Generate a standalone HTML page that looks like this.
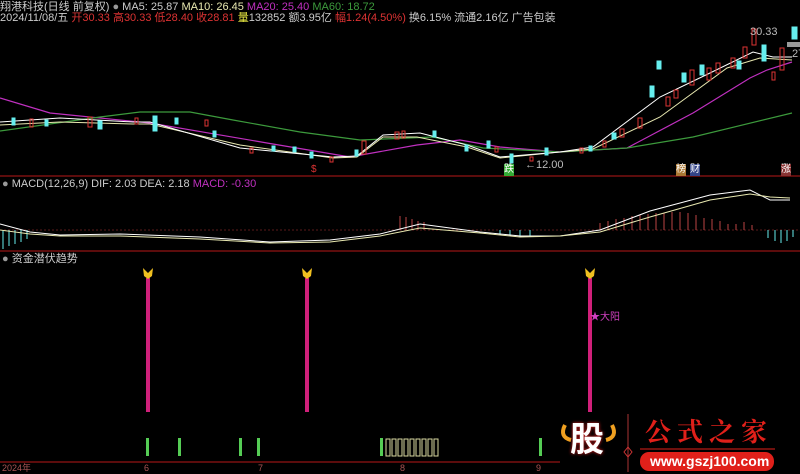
<!DOCTYPE html>
<html><head><meta charset="utf-8"><style>
body{margin:0;background:#000;width:800px;height:472px;overflow:hidden;font-family:"Liberation Sans","Noto Sans CJK SC",sans-serif}
.t{position:absolute;font-size:11px;white-space:nowrap;line-height:12px}
</style></head><body>
<div style="position:relative;width:800px;height:472px">
<svg width="800" height="472" style="position:absolute;left:0;top:0">
<g stroke="#7a1010" stroke-width="1.5"><line x1="0" y1="176" x2="800" y2="176"/><line x1="0" y1="251" x2="800" y2="251"/><line x1="0" y1="462" x2="560" y2="462"/></g>
<line x1="0" y1="230" x2="800" y2="230" stroke="#5a1a1a" stroke-dasharray="2,2"/>
<polyline fill="none" stroke="#c030c0" stroke-width="1.2" points="0,98 50,113 150,123 267,143 350,157 417,145 460,140 500,147 560,152 627,148 693,113 750,78 767,70 792,62"/>
<polyline fill="none" stroke="#3c9a3c" stroke-width="1.2" points="0,131 100,117 140,112 190,112 233,120 300,132 360,140 433,137 483,148 523,150 560,152 627,148 693,137 792,113"/>
<polyline fill="none" stroke="#e8e8b0" stroke-width="1" points="0,125 60,122 133,124 150,124 240,145 333,158 357,157 383,137 417,137 467,147 500,158 560,152 593,149 660,117 727,68 760,58 792,60"/>
<polyline fill="none" stroke="#fff" stroke-width="1" points="0,122 60,118 133,122 150,122 240,148 333,157 357,156 383,135 420,133 467,145 500,157 560,152 593,147 660,97 710,73 753,52 773,57 792,57"/>
<g fill="#6ee" stroke="#6ee">
<rect x="12" y="118" width="3" height="7"/><rect x="45" y="120" width="3" height="6"/><rect x="98" y="121" width="4" height="8"/><rect x="175" y="118" width="3" height="6"/><rect x="153" y="116" width="4" height="15"/><rect x="213" y="131" width="3" height="6"/><rect x="293" y="147" width="3" height="5"/><rect x="272" y="146" width="3" height="5"/><rect x="310" y="152" width="3" height="6"/><rect x="355" y="150" width="3" height="6"/><rect x="433" y="131" width="3" height="6"/><rect x="465" y="145" width="3" height="6"/><rect x="487" y="141" width="3" height="7"/><rect x="510" y="154" width="3" height="9"/><rect x="545" y="148" width="3" height="7"/><rect x="650" y="86" width="4" height="11"/><rect x="657" y="61" width="4" height="8"/><rect x="682" y="73" width="4" height="9"/><rect x="700" y="65" width="4" height="10"/><rect x="737" y="61" width="4" height="8"/><rect x="762" y="45" width="4" height="16"/><rect x="792" y="27" width="5" height="12"/><rect x="589" y="146" width="3" height="5"/><rect x="612" y="133" width="4" height="6"/>
</g>
<g fill="none" stroke="#d33">
<rect x="30" y="119" width="3" height="8"/><rect x="88" y="117" width="4" height="10"/><rect x="135" y="118" width="3" height="6"/><rect x="205" y="120" width="3" height="6"/><rect x="395" y="132" width="4" height="7"/><rect x="250" y="148" width="3" height="5"/><rect x="330" y="157" width="3" height="5"/><rect x="362" y="141" width="4" height="13"/><rect x="402" y="131" width="3" height="7"/><rect x="495" y="147" width="3" height="5"/><rect x="530" y="157" width="3" height="4"/><rect x="580" y="148" width="3" height="5"/><rect x="603" y="141" width="3" height="6"/><rect x="620" y="129" width="4" height="8"/><rect x="638" y="118" width="4" height="10"/><rect x="666" y="97" width="4" height="9"/><rect x="674" y="90" width="4" height="8"/><rect x="690" y="70" width="4" height="15"/><rect x="707" y="68" width="4" height="12"/><rect x="716" y="63" width="4" height="10"/><rect x="731" y="58" width="4" height="10"/><rect x="743" y="47" width="4" height="11"/><rect x="752" y="29" width="4" height="16"/><rect x="772" y="72" width="3" height="8"/><rect x="780" y="48" width="4" height="22"/></g>
<rect x="787" y="42" width="13" height="5" fill="#999"/>
<g stroke="#6ee" stroke-width="1"><line x1="3" y1="230" x2="3" y2="249"/><line x1="9" y1="230" x2="9" y2="246"/><line x1="15" y1="230" x2="15" y2="244"/><line x1="21" y1="230" x2="21" y2="242"/><line x1="27" y1="230" x2="27" y2="239"/>
<line x1="500" y1="230" x2="500" y2="234"/><line x1="510" y1="230" x2="510" y2="236"/><line x1="520" y1="230" x2="520" y2="237"/><line x1="530" y1="230" x2="530" y2="236"/><line x1="768" y1="230" x2="768" y2="238"/><line x1="775" y1="230" x2="775" y2="241"/><line x1="781" y1="230" x2="781" y2="243"/><line x1="787" y1="230" x2="787" y2="241"/><line x1="793" y1="230" x2="793" y2="237"/></g>
<g stroke="#b44" stroke-width="1"><line x1="400" y1="230" x2="400" y2="216"/><line x1="406" y1="230" x2="406" y2="217"/><line x1="412" y1="230" x2="412" y2="219"/><line x1="418" y1="230" x2="418" y2="221"/><line x1="424" y1="230" x2="424" y2="222"/><line x1="600" y1="230" x2="600" y2="223"/><line x1="608" y1="230" x2="608" y2="221"/><line x1="616" y1="230" x2="616" y2="219"/><line x1="624" y1="230" x2="624" y2="218"/><line x1="632" y1="230" x2="632" y2="216"/><line x1="640" y1="230" x2="640" y2="215"/><line x1="648" y1="230" x2="648" y2="214"/><line x1="656" y1="230" x2="656" y2="213"/><line x1="664" y1="230" x2="664" y2="213"/><line x1="672" y1="230" x2="672" y2="212"/><line x1="680" y1="230" x2="680" y2="212"/><line x1="688" y1="230" x2="688" y2="213"/><line x1="696" y1="230" x2="696" y2="215"/><line x1="704" y1="230" x2="704" y2="218"/><line x1="712" y1="230" x2="712" y2="219"/><line x1="720" y1="230" x2="720" y2="221"/><line x1="728" y1="230" x2="728" y2="224"/><line x1="736" y1="230" x2="736" y2="224"/><line x1="744" y1="230" x2="744" y2="222"/><line x1="752" y1="230" x2="752" y2="225"/></g>
<polyline fill="none" stroke="#fff" points="0,224 30,232 60,235 120,234 200,237 270,242 330,240 380,234 420,224 480,232 520,236 560,236 600,230 650,211 710,195 750,190 770,200 790,200"/>
<polyline fill="none" stroke="#e8e8b0" points="0,230 30,234 60,236 120,236 200,239 270,243 330,242 380,236 420,228 480,233 520,237 560,236 600,232 650,217 710,200 750,194 770,197 790,198"/>
<g stroke="#d0207a" stroke-width="4"><line x1="148" y1="278" x2="148" y2="412"/><line x1="307" y1="278" x2="307" y2="412"/><line x1="590" y1="278" x2="590" y2="412"/></g>
<g fill="#f0c020"><path d="M143,268 l5,5 5,-5 -1,8 -4,3 -4,-3z"/><path d="M302,268 l5,5 5,-5 -1,8 -4,3 -4,-3z"/><path d="M585,268 l5,5 5,-5 -1,8 -4,3 -4,-3z"/></g>
<g fill="#5c5"><rect x="146" y="438" width="3" height="18"/><rect x="178" y="438" width="3" height="18"/><rect x="239" y="438" width="3" height="18"/><rect x="257" y="438" width="3" height="18"/><rect x="380" y="438" width="3" height="18"/><rect x="539" y="438" width="3" height="18"/></g>
<g fill="none" stroke="#d8d8a0"><rect x="386" y="439" width="4" height="17"/><rect x="392" y="439" width="4" height="17"/><rect x="398" y="439" width="4" height="17"/><rect x="404" y="439" width="4" height="17"/><rect x="410" y="439" width="4" height="17"/><rect x="416" y="439" width="4" height="17"/><rect x="422" y="439" width="4" height="17"/><rect x="428" y="439" width="4" height="17"/><rect x="434" y="439" width="4" height="17"/></g>
<line x1="628" y1="414" x2="628" y2="472" stroke="#a33"/>
<path d="M628,447 l4,5 -4,5 -4,-5z" fill="none" stroke="#c33"/>
<rect x="640" y="452" width="134" height="19" rx="9" fill="#e0201a"/>
<line x1="640" y1="449" x2="775" y2="449" stroke="#e0201a"/>
<path d="M565,425 q-6,12 6,15" stroke="#f0a020" stroke-width="4" fill="none"/><path d="M612,425 q6,12 -6,15" stroke="#f0a020" stroke-width="4" fill="none"/>
</svg>
<div class="t" style="left:0px;top:1px;color:#ccc">翔港科技(日线 前复权) <span style="color:#999">●</span> MA5: 25.87 <span style="color:#e8e8b0">MA10: 26.45</span> <span style="color:#c030c0">MA20: 25.40</span> <span style="color:#3c9a3c">MA60: 18.72</span></div>
<div class="t" style="left:0px;top:12px;color:#ccc">2024/11/08/五 <span style="color:#d33">开30.33 高30.33 低28.40 收28.81</span> <span style="color:#ee4">量</span>132852 额3.95亿 <span style="color:#d33">幅1.24(4.50%)</span> 换6.15% 流通2.16亿 广告包装</div>
<div class="t" style="left:750px;top:26px;color:#bbb">30.33</div>
<div class="t" style="left:792px;top:48px;color:#bbb">27</div>
<div class="t" style="left:525px;top:159px;color:#bbb">←12.00</div>
<div class="t" style="left:311px;top:164px;color:#d33;font-size:10px">$</div>
<div class="t" style="left:504px;top:164px;color:#fff;background:#3a3;font-size:10px">跌</div>
<div class="t" style="left:676px;top:164px;color:#fff;background:#a73;font-size:10px">榜</div>
<div class="t" style="left:690px;top:164px;color:#fff;background:#348;font-size:10px">财</div>
<div class="t" style="left:781px;top:164px;color:#fff;background:#833;font-size:10px">涨</div>
<div class="t" style="left:2px;top:178px;color:#ccc"><span style="color:#999">●</span> MACD(12,26,9) DIF: 2.03 DEA: 2.18 <span style="color:#c030c0">MACD: -0.30</span></div>
<div class="t" style="left:2px;top:253px;color:#ccc"><span style="color:#999">●</span> 资金潜伏趋势</div>
<div class="t" style="left:590px;top:312px;color:#d040c0;font-size:10px">★大阳</div>
<div class="t" style="left:2px;top:462px;color:#a55;font-size:9px">2024年</div>
<div class="t" style="left:144px;top:462px;color:#a55;font-size:9px">6</div>
<div class="t" style="left:258px;top:462px;color:#a55;font-size:9px">7</div>
<div class="t" style="left:400px;top:462px;color:#a55;font-size:9px">8</div>
<div class="t" style="left:536px;top:462px;color:#a55;font-size:9px">9</div>
<div class="t" style="left:570px;top:420px;color:#fff;font-size:34px;line-height:40px;font-weight:bold;text-shadow:0 0 3px #e02020">股</div>
<div class="t" style="left:645px;top:416px;color:#e0201a;font-size:26px;line-height:30px;font-weight:bold;letter-spacing:6px;font-family:'Noto Serif CJK SC',serif">公式之家</div>
<div class="t" style="left:650px;top:453px;color:#fff;font-size:14px;line-height:17px;font-weight:bold">www.gszj100.com</div>
</div>
</body></html>
